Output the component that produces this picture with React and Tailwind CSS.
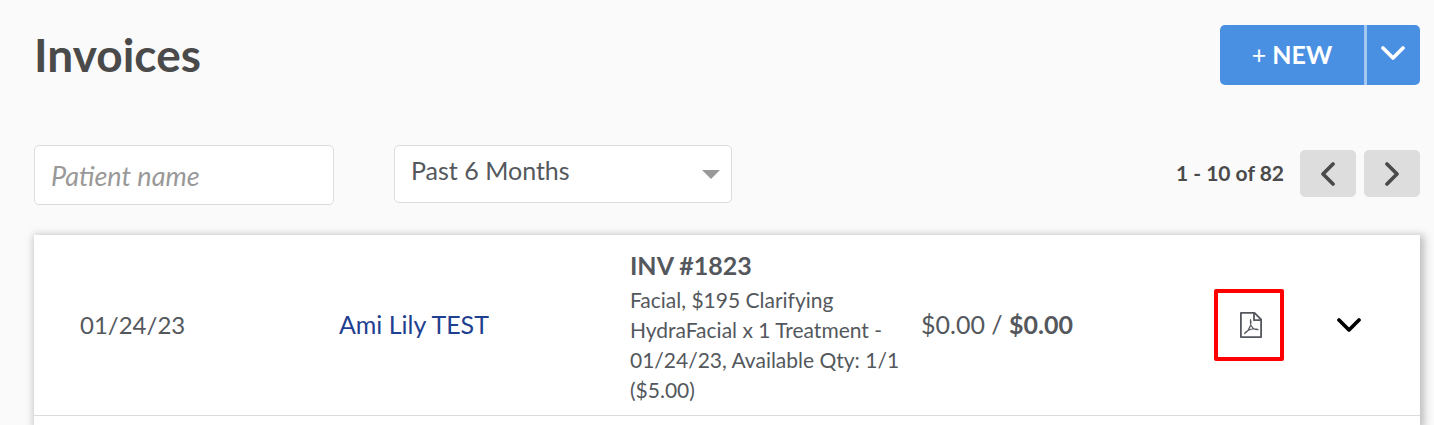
import React from "react";

const invoices = [
  {
    date: "01/24/23",
    patient: "Ami Lily TEST",
    number: "INV #1823",
    details:
      "Facial, $195 Clarifying HydraFacial x 1 Treatment - 01/24/23, Available Qty: 1/1 ($5.00)",
    due: "$0.00",
    total: "$0.00",
  },
];

const Chevron = ({ direction = "down", className = "" }) => {
  const paths = {
    down: "M2 2 L12 12 L22 2",
    left: "M12 2 L2 12 L12 22",
    right: "M2 2 L12 12 L2 22",
  };

  return (
    <svg
      viewBox={direction === "down" ? "0 0 24 14" : "0 0 14 24"}
      className={className}
      fill="none"
      stroke="currentColor"
      strokeWidth="3.7"
      strokeLinecap="round"
      strokeLinejoin="round"
      aria-hidden="true"
    >
      <path d={paths[direction]} />
    </svg>
  );
};

const PdfIcon = () => (
  <svg
    viewBox="0 0 22 26"
    className="h-[26px] w-[22px]"
    fill="none"
    stroke="currentColor"
    strokeLinejoin="round"
    aria-hidden="true"
  >
    <path strokeWidth="1.8" d="M0.9 0.9 H14.5 L21.1 7.5 V25.1 H0.9 Z" />
    <path strokeWidth="1.8" d="M14 0.9 V8.2 H21.1" />
    <path
      strokeWidth="1.1"
      strokeLinecap="round"
      d="M10.6 7.6 C11.3 9.4 11.1 11.4 10.6 13.2 C9.4 16.6 7.2 19.8 4.6 21.6 M4.6 21.6 C5 20 7.8 18.2 11 17.2 C13.4 16.6 16 16.6 18 17.6 M10.4 8.6 C10.2 11.4 11 14 12.8 15.8 C14.2 17.2 16 17.9 18 17.6"
    />
  </svg>
);

const InvoiceRow = ({ invoice }) => (
  <tr className="border-b border-[#dcdcdc]">
    <td className="pl-[46px] text-2xl">{invoice.date}</td>
    <td>
      <a href="#patient" className="text-[#1f3f91]">
        {invoice.patient}
      </a>
    </td>
    <td className="pt-3 pr-4 pb-2.5">
      <div className="font-bold leading-9">{invoice.number}</div>
      <div className="mt-0.5 text-[21px] leading-[30px]">
        {invoice.details}
      </div>
    </td>
    <td>
      {invoice.due} / <strong className="font-bold">{invoice.total}</strong>
    </td>
    <td className="pl-1 text-center">
      <button
        type="button"
        aria-label="Download PDF"
        className="inline-flex h-[72px] w-[70px] items-center justify-center rounded-xs border-4 border-[#ff0000] pl-1 align-middle"
      >
        <PdfIcon />
      </button>
    </td>
    <td className="pr-[18px] text-center">
      <button
        type="button"
        aria-label="Expand invoice"
        className="inline-flex p-2 pb-3 align-middle text-black"
      >
        <Chevron className="h-[14px] w-6" />
      </button>
    </td>
  </tr>
);

const App = () => {
  return (
    <div className="flex min-h-screen flex-col bg-[#fafafa] pt-[25px] pr-[14px] pl-[34px] font-[Lato,sans-serif] text-[25px] text-[#54585d]">
      <header className="flex items-start justify-between">
        <h1 className="text-[46px] leading-[60px] font-bold text-[#4a4a4a]">
          Invoices
        </h1>
        <div className="flex h-[60px] overflow-hidden rounded-[5px] bg-[#4a90e2] text-white">
          <button type="button" className="w-36 font-bold">
            <span className="font-normal">+</span> NEW
          </button>
          <button
            type="button"
            aria-label="More options"
            className="flex w-14 items-center justify-center border-l-3 border-[#a5c8f1] pr-0.5 pb-1"
          >
            <Chevron className="h-[14px] w-6" />
          </button>
        </div>
      </header>

      <div className="mt-[60px] flex items-start">
        <input
          type="text"
          aria-label="Patient name"
          placeholder="Patient name"
          className="h-[60px] w-[300px] rounded-[5px] border border-[#dcdcdc] bg-white px-4 text-[27px] placeholder:text-[#999999] placeholder:italic"
        />
        <div className="relative ml-[60px]">
          <select
            aria-label="Date range"
            className="h-[58px] w-[338px] appearance-none rounded-[5px] border border-[#dcdcdc] bg-white px-4 pb-1.5"
          >
            <option>Past 6 Months</option>
          </select>
          <svg
            viewBox="0 0 18 9"
            className="pointer-events-none absolute top-[25px] right-3 h-[9px] w-[18px] fill-[#999999]"
            aria-hidden="true"
          >
            <path d="M0 0 H18 L9 9 Z" />
          </svg>
        </div>
        <div className="mt-[5px] ml-auto flex items-center gap-2 text-[#4a4a4a]">
          <span className="mr-2 pb-0.5 text-[21px] font-bold">
            1 - 10 of 82
          </span>
          <button
            type="button"
            aria-label="Previous page"
            className="flex h-[47px] w-14 items-center justify-center rounded-[5px] bg-[#dddddd]"
          >
            <Chevron direction="left" className="h-6 w-[14px]" />
          </button>
          <button
            type="button"
            aria-label="Next page"
            className="flex h-[47px] w-14 items-center justify-center rounded-[5px] bg-[#dddddd]"
          >
            <Chevron direction="right" className="h-6 w-[14px]" />
          </button>
        </div>
      </div>

      <main className="mt-[30px] flex-1 bg-white shadow-[2px_2px_8px_2px_rgba(0,0,0,0.25)]">
        <table className="w-full table-fixed" aria-label="Invoices">
          <colgroup>
            <col className="w-[22%]" />
            <col className="w-[21%]" />
            <col className="w-[21%]" />
            <col />
            <col className="w-[7%]" />
            <col className="w-[9%]" />
          </colgroup>
          <tbody>
            {invoices.map((invoice) => (
              <InvoiceRow key={invoice.number} invoice={invoice} />
            ))}
          </tbody>
        </table>
      </main>
    </div>
  );
};

export default App;
